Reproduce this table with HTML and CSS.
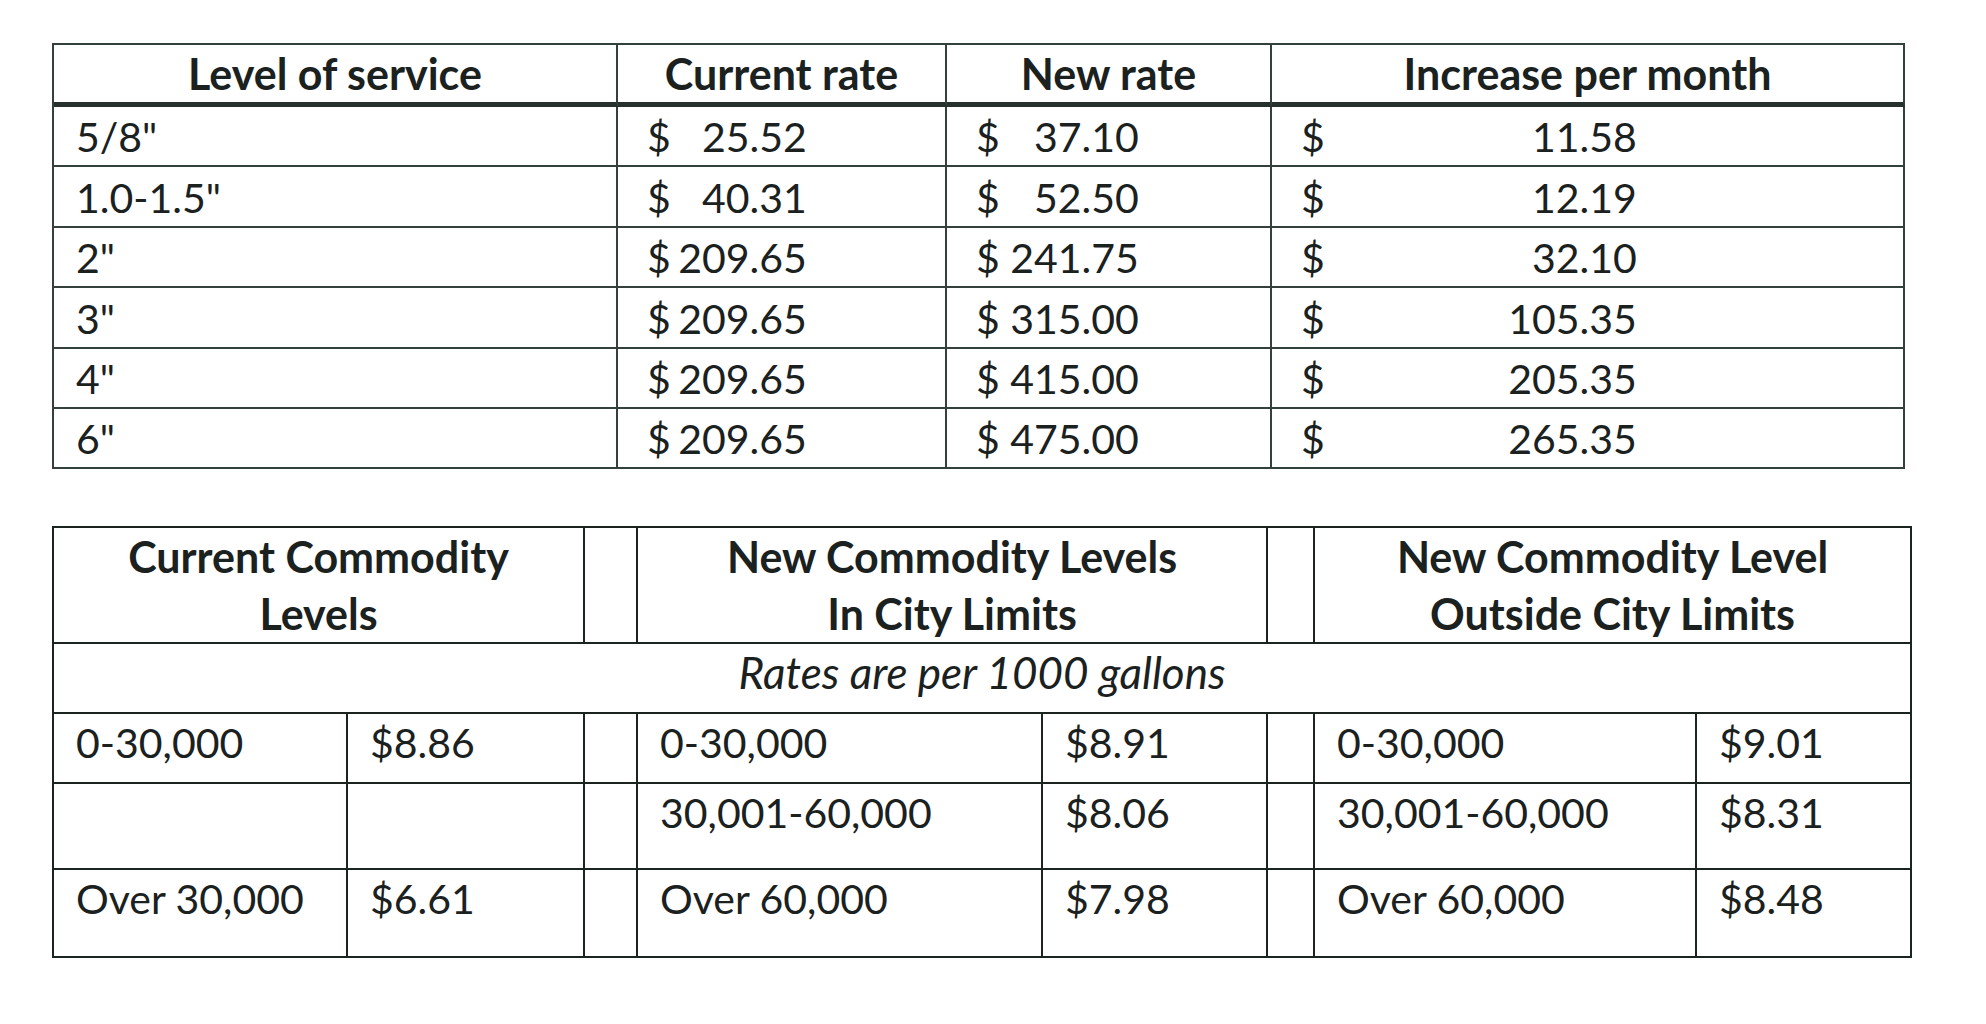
FILE: index.html
```html
<!DOCTYPE html>
<html lang="en">
<head>
<meta charset="utf-8">
<title>Water rates</title>
<link rel="stylesheet" href="styles.css">
</head>
<body>
<main class="page">
  <table class="rates">
    <colgroup>
      <col class="c-level"><col class="c-cur"><col class="c-new"><col class="c-inc">
    </colgroup>
    <thead>
      <tr>
        <th>Level of service</th>
        <th>Current rate</th>
        <th>New rate</th>
        <th>Increase per month</th>
      </tr>
    </thead>
    <tbody>
      <tr>
        <td>5/8"</td>
        <td class="cur-col"><span class="cur">$</span><span class="num">25.52</span></td>
        <td class="new-col"><span class="cur">$</span><span class="num">37.10</span></td>
        <td class="inc-col"><span class="cur">$</span><span class="num">11.58</span></td>
      </tr>
      <tr>
        <td>1.0-1.5"</td>
        <td class="cur-col"><span class="cur">$</span><span class="num">40.31</span></td>
        <td class="new-col"><span class="cur">$</span><span class="num">52.50</span></td>
        <td class="inc-col"><span class="cur">$</span><span class="num">12.19</span></td>
      </tr>
      <tr>
        <td>2"</td>
        <td class="cur-col"><span class="cur">$</span><span class="num">209.65</span></td>
        <td class="new-col"><span class="cur">$</span><span class="num">241.75</span></td>
        <td class="inc-col"><span class="cur">$</span><span class="num">32.10</span></td>
      </tr>
      <tr>
        <td>3"</td>
        <td class="cur-col"><span class="cur">$</span><span class="num">209.65</span></td>
        <td class="new-col"><span class="cur">$</span><span class="num">315.00</span></td>
        <td class="inc-col"><span class="cur">$</span><span class="num">105.35</span></td>
      </tr>
      <tr>
        <td>4"</td>
        <td class="cur-col"><span class="cur">$</span><span class="num">209.65</span></td>
        <td class="new-col"><span class="cur">$</span><span class="num">415.00</span></td>
        <td class="inc-col"><span class="cur">$</span><span class="num">205.35</span></td>
      </tr>
      <tr>
        <td>6"</td>
        <td class="cur-col"><span class="cur">$</span><span class="num">209.65</span></td>
        <td class="new-col"><span class="cur">$</span><span class="num">475.00</span></td>
        <td class="inc-col"><span class="cur">$</span><span class="num">265.35</span></td>
      </tr>
    </tbody>
  </table>

  <table class="commodity">
    <colgroup>
      <col class="k1"><col class="k2"><col class="ks1">
      <col class="k3"><col class="k4"><col class="ks2">
      <col class="k5"><col class="k6">
    </colgroup>
    <thead>
      <tr class="head">
        <th colspan="2">Current Commodity<br>Levels</th>
        <th class="gap"></th>
        <th colspan="2">New Commodity Levels<br>In City Limits</th>
        <th class="gap"></th>
        <th colspan="2">New Commodity Level<br>Outside City Limits</th>
      </tr>
    </thead>
    <tbody>
      <tr class="note">
        <td colspan="8">Rates are per 1000 gallons</td>
      </tr>
      <tr class="r1">
        <td>0-30,000</td><td>$8.86</td><td class="gap"></td>
        <td>0-30,000</td><td>$8.91</td><td class="gap"></td>
        <td>0-30,000</td><td>$9.01</td>
      </tr>
      <tr class="r2">
        <td></td><td></td><td class="gap"></td>
        <td>30,001-60,000</td><td>$8.06</td><td class="gap"></td>
        <td>30,001-60,000</td><td>$8.31</td>
      </tr>
      <tr class="r3">
        <td>Over 30,000</td><td>$6.61</td><td class="gap"></td>
        <td>Over 60,000</td><td>$7.98</td><td class="gap"></td>
        <td>Over 60,000</td><td>$8.48</td>
      </tr>
    </tbody>
  </table>
</main>
</body>
</html>
```

FILE: styles.css
```css
* {
  box-sizing: border-box;
}

html, body {
  margin: 0;
  padding: 0;
  background: #ffffff;
}

body {
  font-family: Lato, "Open Sans", "Liberation Sans", sans-serif;
  font-size: 41px;
  color: #1b211e;
  width: 1986px;
  height: 1024px;
  overflow: hidden;
}

.page {
  padding: 43px 0 0 52px;
}

table {
  border-spacing: 0;
  border-collapse: separate;
  table-layout: fixed;
}

th, td {
  padding: 0 0 0 22px;
  vertical-align: top;
  line-height: 57px;
  white-space: nowrap;
}

th {
  font-size: 43px;
  font-weight: 700;
}

/* ---------- Table 1 ---------- */
.rates {
  width: 1851px;
  border-top: 2px solid #34403b;
  border-left: 2px solid #34403b;
}

.rates th,
.rates td {
  border-right: 2px solid #34403b;
  border-bottom: 2px solid #34403b;
}

.rates .c-level { width: 564px; }
.rates .c-cur { width: 329px; }
.rates .c-new { width: 325px; }
.rates .c-inc { width: 633px; }

.rates th {
  height: 62px;
  padding: 0;
  line-height: 57px;
  text-align: center;
  border-bottom: 5px solid #26302c;
}

.rates td {
  height: 60.4px;
  padding-top: 1.4px;
}

.rates td + td {
  padding-left: 29px;
}

.cur {
  display: inline-block;
}

.num {
  display: inline-block;
  text-align: right;
}

.cur-col .num { width: 136px; }
.new-col .num { width: 139px; }
.inc-col .num { width: 312px; }

/* ---------- Table 2 ---------- */
.commodity {
  width: 1858px;
  margin-top: 57px;
  border-top: 2px solid #1c2420;
  border-left: 2px solid #1c2420;
}

.commodity th,
.commodity td {
  border-right: 2px solid #1c2420;
  border-bottom: 2px solid #1c2420;
}

.commodity .k1 { width: 294px; }
.commodity .k2 { width: 237px; }
.commodity .ks1 { width: 53px; }
.commodity .k3 { width: 405px; }
.commodity .k4 { width: 225px; }
.commodity .ks2 { width: 47px; }
.commodity .k5 { width: 382px; }
.commodity .k6 { width: 215px; }

.commodity th {
  height: 116px;
  padding: 0;
  text-align: center;
}

.commodity .gap {
  padding: 0;
}

.commodity .note td {
  height: 70px;
  padding: 0;
  text-align: center;
  font-style: italic;
  font-size: 44px;
}

.commodity .r1 td { height: 70px; }
.commodity .r2 td { height: 86px; }
.commodity .r3 td { height: 88px; }
```
